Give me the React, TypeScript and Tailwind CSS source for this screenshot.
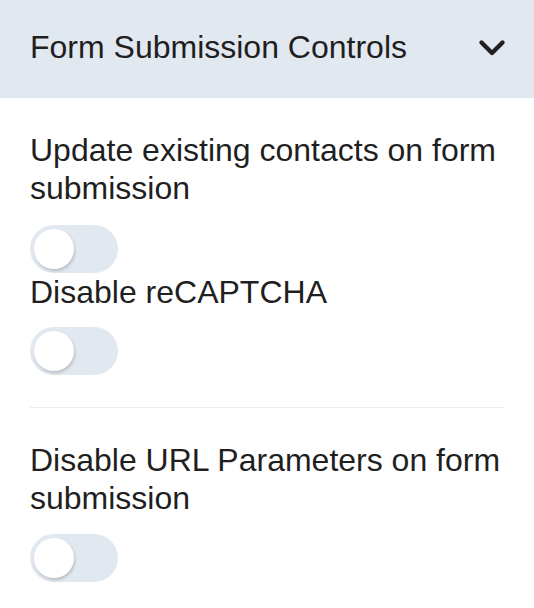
import { useState } from 'react'

const Toggle = ({ on, onChange }: { on: boolean; onChange: () => void }) => (
  <button
    onClick={onChange}
    className={`relative block w-[88px] h-[48px] rounded-full transition ${on ? 'bg-[#3b82f6]' : 'bg-[#e2e8f0]'}`}
  >
    <span
      className={`absolute top-[4px] w-[40px] h-[40px] rounded-full bg-white shadow-[1px_2px_3px_rgba(0,0,0,0.18)] transition-all ${on ? 'left-[44px]' : 'left-[4px]'}`}
    />
  </button>
)

const App = () => {
  const [open, setOpen] = useState(true)
  const [updateContacts, setUpdateContacts] = useState(false)
  const [noCaptcha, setNoCaptcha] = useState(false)
  const [noUrlParams, setNoUrlParams] = useState(false)

  return (
    <div className="w-[534px] min-h-[608px] bg-white text-[#1f1f1f] font-['Liberation_Sans',Arial,sans-serif]">
      {/* ===== Header ===== */}
      <button
        onClick={() => setOpen(!open)}
        className="w-full h-[98px] bg-[#e2e8f0] flex items-center justify-between pl-[30px] pr-[28px] pb-[4px]"
      >
        <span className="text-[32px] leading-none">Form Submission Controls</span>
        <svg width="28" height="18" viewBox="0 0 28 18" fill="none" stroke="#1f1f1f" strokeWidth="4.4" strokeLinecap="round" strokeLinejoin="round" className="mt-[2px]">
          <path d="M3.5 3.5l10.5 10.5 10.5-10.5" />
        </svg>
      </button>

      {open && (
        <div className="px-[30px] pt-[33px] text-[32px] leading-[38px]">
          <p>Update existing contacts on form submission</p>
          <div className="mt-[18px]">
            <Toggle on={updateContacts} onChange={() => setUpdateContacts(!updateContacts)} />
          </div>

          <p>Disable reCAPTCHA</p>
          <div className="mt-[16px]">
            <Toggle on={noCaptcha} onChange={() => setNoCaptcha(!noCaptcha)} />
          </div>

          <div className="border-t-[1.5px] border-[#ececec] mt-[32px] mb-[33px]" />

          <p>Disable URL Parameters on form submission</p>
          <div className="mt-[17px]">
            <Toggle on={noUrlParams} onChange={() => setNoUrlParams(!noUrlParams)} />
          </div>
        </div>
      )}
    </div>
  )
}

export default App
